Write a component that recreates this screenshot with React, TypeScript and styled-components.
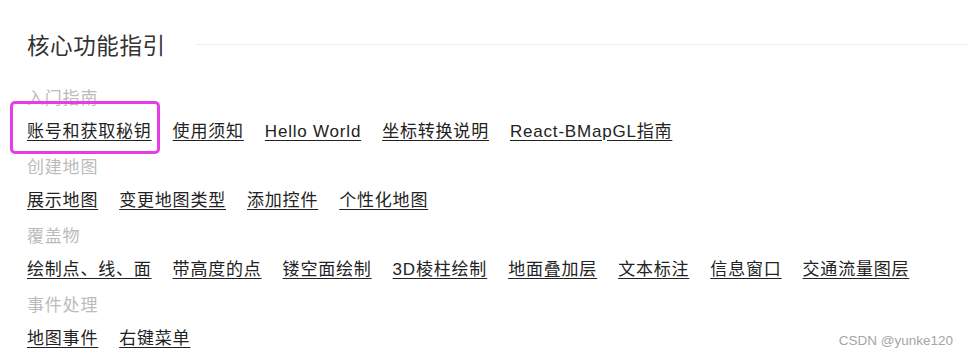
import styled, { createGlobalStyle } from "styled-components";

const GlobalStyle = createGlobalStyle`
  body {
    margin: 0;
    background: #fff;
    font-family: "Liberation Sans", "Noto Sans CJK SC", sans-serif;
  }
`;

const sections = [
  {
    label: "入门指南",
    links: ["账号和获取秘钥", "使用须知", "Hello World", "坐标转换说明", "React-BMapGL指南"],
  },
  {
    label: "创建地图",
    links: ["展示地图", "变更地图类型", "添加控件", "个性化地图"],
  },
  {
    label: "覆盖物",
    links: [
      "绘制点、线、面",
      "带高度的点",
      "镂空面绘制",
      "3D棱柱绘制",
      "地面叠加层",
      "文本标注",
      "信息窗口",
      "交通流量图层",
    ],
  },
  {
    label: "事件处理",
    links: ["地图事件", "右键菜单"],
  },
];

function App() {
  return (
    <>
      <GlobalStyle />
      <Page>
        <TitleRow>
          <Title>核心功能指引</Title>
          <TitleLine />
        </TitleRow>
        <Sections>
          {sections.map((s, i) => (
            <Section key={s.label}>
              <Label>{s.label}</Label>
              <LinkRow>
                {s.links.map((l, j) => (
                  <Link key={l} highlight={i === 0 && j === 0}>
                    {l}
                  </Link>
                ))}
              </LinkRow>
            </Section>
          ))}
        </Sections>
        <Watermark>CSDN @yunke120</Watermark>
      </Page>
    </>
  );
}

const Page = styled.div`
  position: relative;
  width: 969px;
  height: 358px;
  padding: 29px 0 0 27px;
  box-sizing: border-box;
  overflow: hidden;
`;

const TitleRow = styled.div`
  display: flex;
  align-items: center;
  height: 30px;
`;

const Title = styled.div`
  font-family: "Noto Sans CJK SC", sans-serif;
  font-size: 22.5px;
  letter-spacing: 0.6px;
  color: #333;
  line-height: 30px;
`;

const TitleLine = styled.div`
  flex: 1;
  height: 1px;
  background: #eeeeee;
  margin-left: 30px;
`;

const Sections = styled.div`
  margin-top: 24px;
`;

const Section = styled.div`
  margin-bottom: 3px;
`;

const Label = styled.div`
  font-size: 17px;
  letter-spacing: 0.8px;
  line-height: 32px;
  color: #bbbbbb;
`;

const LinkRow = styled.div`
  display: flex;
  gap: 21px;
  line-height: 34px;
`;

const Link = styled.span<{ highlight?: boolean }>`
  position: relative;
  font-size: 17px;
  letter-spacing: 0.8px;
  color: #222;
  text-decoration: underline;
  text-underline-offset: 3px;
  cursor: pointer;
  white-space: nowrap;
  ${(p) =>
    p.highlight &&
    `
    &::after {
      content: "";
      position: absolute;
      left: -17px;
      right: -8px;
      top: -14px;
      bottom: -5px;
      border: 3px solid #e63de6;
      border-radius: 5px;
      pointer-events: none;
    }
  `}
`;

const Watermark = styled.div`
  position: absolute;
  right: 16px;
  bottom: 10px;
  font-size: 13.5px;
  color: #a5a5a5;
`;

export default App;
